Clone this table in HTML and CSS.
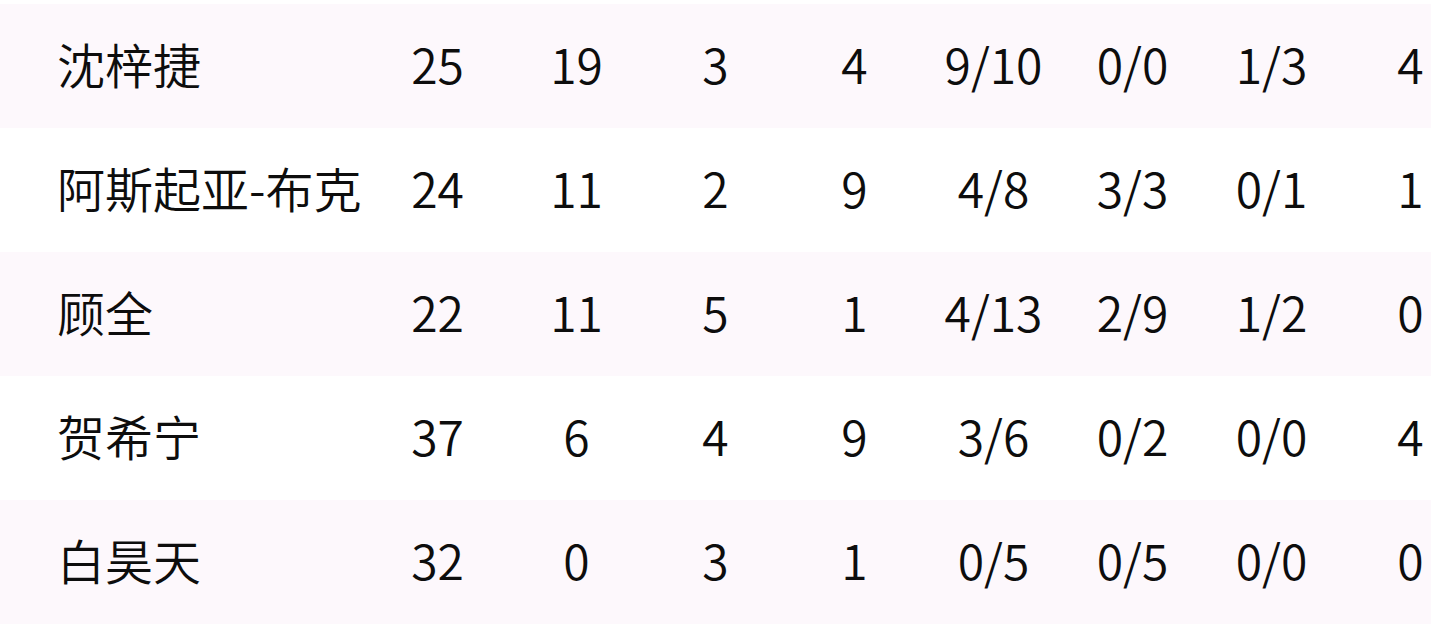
FILE: index.html
```html
<!DOCTYPE html>
<html lang="zh">
<head>
<meta charset="utf-8">
<link rel="stylesheet" href="styles.css">
</head>
<body>
<div class="stats">
  <div class="row alt">
    <div class="name">沈梓捷</div><div class="cell">25</div><div class="cell">19</div><div class="cell">3</div><div class="cell">4</div><div class="cell">9/10</div><div class="cell">0/0</div><div class="cell">1/3</div><div class="cell">4</div>
  </div>
  <div class="row">
    <div class="name">阿斯起亚-布克</div><div class="cell">24</div><div class="cell">11</div><div class="cell">2</div><div class="cell">9</div><div class="cell">4/8</div><div class="cell">3/3</div><div class="cell">0/1</div><div class="cell">1</div>
  </div>
  <div class="row alt">
    <div class="name">顾全</div><div class="cell">22</div><div class="cell">11</div><div class="cell">5</div><div class="cell">1</div><div class="cell">4/13</div><div class="cell">2/9</div><div class="cell">1/2</div><div class="cell">0</div>
  </div>
  <div class="row">
    <div class="name">贺希宁</div><div class="cell">37</div><div class="cell">6</div><div class="cell">4</div><div class="cell">9</div><div class="cell">3/6</div><div class="cell">0/2</div><div class="cell">0/0</div><div class="cell">4</div>
  </div>
  <div class="row alt">
    <div class="name">白昊天</div><div class="cell">32</div><div class="cell">0</div><div class="cell">3</div><div class="cell">1</div><div class="cell">0/5</div><div class="cell">0/5</div><div class="cell">0/0</div><div class="cell">0</div>
  </div>
</div>
</body>
</html>
```

FILE: styles.css
```css
html, body {
  margin: 0;
  padding: 0;
  background: #ffffff;
  overflow: hidden;
}
body {
  width: 1431px;
  height: 640px;
}
.stats {
  padding-top: 4px;
  font-family: "Noto Sans CJK SC", "Noto Sans", sans-serif;
  font-size: 48px;
  font-weight: 350;
  color: #0d0d0d;
  width: 1480px;
}
.row {
  display: grid;
  grid-template-columns: 368px repeat(8, 139px);
  height: 124px;
  box-sizing: border-box;
  padding-bottom: 6px;
  align-items: center;
}
.row.alt {
  background: #fdf8fc;
}
.name {
  padding-left: 57px;
  white-space: nowrap;
}
.cell {
  text-align: center;
  white-space: nowrap;
}
```
